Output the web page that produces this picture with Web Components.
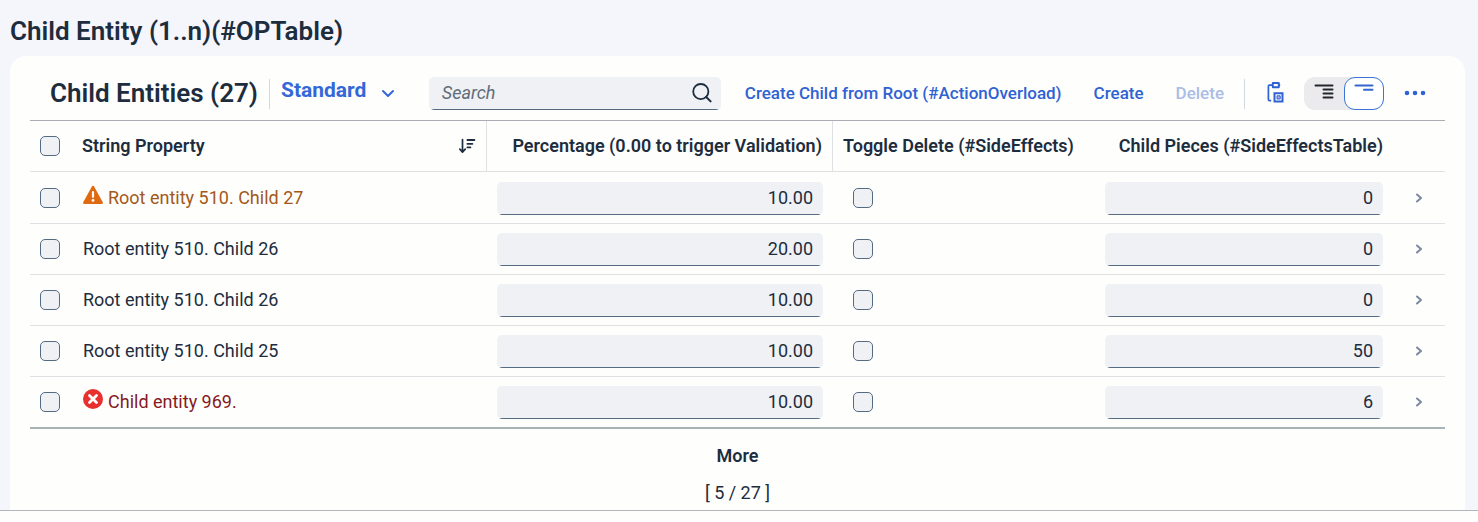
<!DOCTYPE html>
<html lang="en">
<head>
<meta charset="utf-8">
<title>Child Entities</title>
<style>
  body {
    margin: 0;
    background: #fefefd;
    color: #1d2d3e;
    font-family: Roboto, "Noto Sans", sans-serif;
    font-size: 18px;
    --text: #1d2d3e;
    --link: #2f62d3;
    --field: #eff1f5;
    --field-line: #556b82;
    --rule: #dfe1e4;
  }
</style>
</head>
<body>
<object-section heading="Child Entity (1..n)(#OPTable)">
  <table-toolbar slot="toolbar" heading="Child Entities (27)" variant="Standard"></table-toolbar>
  <entity-table></entity-table>
  <growing-trigger count="[ 5 / 27 ]">More</growing-trigger>
</object-section>

<script>
const define = (name, css, render) => customElements.define(name, class extends HTMLElement {
  connectedCallback() {
    if (this.shadowRoot) return;
    const root = this.attachShadow({ mode: "open" });
    root.innerHTML = `<style>*{box-sizing:border-box}${css}</style>${render(this)}`;
  }
});

const icons = {
  down: [14, 14, `<path d="M2 5l5 5 5-5" fill="none" stroke="currentColor" stroke-width="2" stroke-linecap="round" stroke-linejoin="round"/>`],
  next: [8, 10, `<path d="M2 1.5L6 5 2 8.5" fill="none" stroke="currentColor" stroke-width="2" stroke-linecap="round" stroke-linejoin="round"/>`],
  search: [20, 20, `<circle cx="8.8" cy="8.6" r="7.6" fill="none" stroke="currentColor" stroke-width="1.8"/><path d="M14.2 14l4.4 4.4" stroke="currentColor" stroke-width="2" stroke-linecap="round"/>`],
  sort: [17, 16, `<path d="M3.5 1.5v12M.8 11.2l2.7 2.9 2.7-2.9" fill="none" stroke="currentColor" stroke-width="1.7" stroke-linecap="round" stroke-linejoin="round"/><path d="M8.4 2h7M8.4 5.8h5M8.4 9.4h3" stroke="currentColor" stroke-width="1.8" stroke-linecap="round"/>`],
  paste: [17, 21, `<path d="M5.5 3.2H2.4Q1.4 3.2 1.4 4.2V17.6Q1.4 18.6 2.4 18.6H4.2" fill="none" stroke="currentColor" stroke-width="1.7"/><path d="M5.8 1h6v4.2h-6z" fill="none" stroke="currentColor" stroke-width="1.9" stroke-linejoin="round"/><path d="M12 3.2h1.2" stroke="currentColor" stroke-width="1.7"/><path d="M7.5 11.3h8v8.2h-8z" fill="#fefefd" stroke="currentColor" stroke-width="2"/><path d="M10 13.8h3.2v3.2H10z" fill="#b9a8e8" stroke="currentColor" stroke-width="1"/>`],
  expand: [20, 20, `<path d="M1.5 3.5h17M9.5 7.6h9M9.5 11.6h9M9.5 15.6h9" stroke="currentColor" stroke-width="2" stroke-linecap="round"/>`],
  collapse: [20, 20, `<path d="M1.5 3.5h17M10 7.7h8.5" stroke="currentColor" stroke-width="2" stroke-linecap="round"/>`],
  more: [22, 6, `<g fill="currentColor"><circle cx="3" cy="3" r="2.3"/><circle cx="11" cy="3" r="2.3"/><circle cx="19" cy="3" r="2.3"/></g>`],
  warning: [20, 20, `<path d="M10 1.8L18.8 17.8H1.2z" fill="#e06a10" stroke="#e06a10" stroke-width="2.2" stroke-linejoin="round"/><path d="M10 7v4.8" stroke="#fff" stroke-width="2.2" stroke-linecap="round"/><circle cx="10" cy="15.4" r="1.4" fill="#fff"/>`],
  error: [20, 20, `<circle cx="10" cy="10" r="10" fill="#e8312f"/><path d="M6.5 6.5l7 7M13.5 6.5l-7 7" stroke="#fff" stroke-width="2.8" stroke-linecap="round"/>`]
};
define("ui-icon", `:host{display:inline-flex;flex:none}svg{display:block}`, el => {
  const [w, h, body] = icons[el.getAttribute("name")];
  return `<svg width="${w}" height="${h}" viewBox="0 0 ${w} ${h}" aria-hidden="true">${body}</svg>`;
});

define("check-box", `
  :host{display:block;width:20px;height:20px}
  input{appearance:none;display:block;margin:0;width:20px;height:20px;border:1px solid var(--field-line);border-radius:5px;background:var(--field)}
`, el => `<input type="checkbox" aria-label="${el.getAttribute("label")}">`);

define("value-field", `
  :host{display:block}
  input{display:block;width:100%;height:33px;padding:0 10px 2px;border:0;border-radius:5px;text-align:right;font:inherit;color:inherit;
    background:linear-gradient(var(--field-line),var(--field-line)) center bottom/calc(100% - 4px) 1px no-repeat,var(--field)}
`, el => `<input type="text" value="${el.getAttribute("value")}" aria-label="${el.getAttribute("label")}">`);

define("search-field", `
  :host{display:block;position:relative}
  input{display:block;width:100%;height:33px;padding:0 40px 2px 13px;border:0;border-radius:5px;font:inherit;color:inherit;
    background:linear-gradient(var(--field-line),var(--field-line)) center bottom/calc(100% - 4px) 1px no-repeat,var(--field)}
  input::placeholder{color:#5f6c79;font-style:italic;opacity:1}
  button{position:absolute;right:0;top:0;height:32px;width:38px;padding:0;border:0;background:none;color:var(--text);display:flex;align-items:center;justify-content:center}
`, () => `<input type="text" placeholder="Search" aria-label="Search"><button type="button" aria-label="Start search"><ui-icon name="search"></ui-icon></button>`);

define("action-button", `
  :host{display:block}
  button{display:flex;align-items:center;justify-content:center;height:33px;padding:0 0 2px;border:0;background:none;font:inherit;font-size:17px;font-weight:500;color:var(--link);white-space:nowrap}
  button:disabled{color:#aabde6}
`, el => `<button type="button"${el.hasAttribute("off") ? " disabled" : ""}${el.title ? ` aria-label="${el.title}"` : ""}><slot></slot></button>`);

define("detail-switch", `
  :host{display:flex;border-radius:11px;background:#ebebed}
  button{display:flex;justify-content:center;align-items:flex-start;width:40px;height:33px;padding:4px 0 0;border:1px solid transparent;border-radius:11px;background:none;color:#23262c}
  button[aria-pressed=true]{background:#fff;border-color:#3b74d6;color:#3468cf}
`, () => `<button type="button" aria-label="Show details" aria-pressed="false"><ui-icon name="expand"></ui-icon></button><button type="button" aria-label="Hide details" aria-pressed="true"><ui-icon name="collapse"></ui-icon></button>`);

define("table-toolbar", `
  :host{display:flex;align-items:center;height:33px;padding:0 19px 0 20px}
  h3{margin:0;padding-bottom:2px;font-size:26px;line-height:32px;font-weight:600;white-space:nowrap}
  .bar{width:1px;height:30px;background:#d3d8e0;flex:none}
  h3 + .bar{margin:0 11px}
  .variant{display:flex;align-items:center;gap:15px;height:28px;padding:0;margin-bottom:7px;border:0;background:none;font:inherit;font-size:21px;font-weight:700;color:#3468d8}
  .variant ui-icon{padding-top:6px}
  search-field{flex:0 1 292px;margin-left:auto;margin-right:24px}
  nav{display:flex;align-items:center}
  nav > *{margin-right:20px}
  .wide{margin-right:32px}
  .paste{margin-left:2px}
  nav > :last-child{margin-right:0}
`, el => `<h3>${el.getAttribute("heading")}</h3><span class="bar"></span>
  <button class="variant" type="button">${el.getAttribute("variant")}<ui-icon name="down"></ui-icon></button>
  <search-field></search-field>
  <nav>
    <action-button class="wide">Create Child from Root (#ActionOverload)</action-button>
    <action-button class="wide">Create</action-button>
    <action-button off>Delete</action-button>
    <span class="bar"></span>
    <action-button class="paste" title="Paste"><ui-icon name="paste"></ui-icon></action-button>
    <detail-switch></detail-switch>
    <action-button title="More actions"><ui-icon name="more"></ui-icon></action-button>
  </nav>`);

const rows = [
  ["Root entity 510. Child 27", "10.00", "0", "warning"],
  ["Root entity 510. Child 26", "20.00", "0", ""],
  ["Root entity 510. Child 26", "10.00", "0", ""],
  ["Root entity 510. Child 25", "10.00", "50", ""],
  ["Child entity 969.", "10.00", "6", "error"]
];
define("entity-table", `
  :host{display:block;margin-top:10px}
  table{width:100%;table-layout:fixed;border-collapse:separate;border-spacing:0;border-top:1px solid #a9adb2;border-bottom:2px solid #a8b3b8}
  .c-check{width:42px}.c-pct{width:346px}.c-toggle{width:262px}.c-pieces{width:298px}.c-nav{width:52px}
  th,td{height:51px;padding:0 10px;text-align:left;vertical-align:middle;white-space:nowrap;border-bottom:1px solid var(--rule)}
  td{padding-top:1px}
  td check-box,.go{margin-bottom:1px}
  tbody tr:first-child td{height:52px}
  tbody tr:last-child td{height:50px;border-bottom:0}
  th{font-weight:600;line-height:20px;padding-bottom:1px}
  th.num{text-align:right}
  th.line{border-right:1px solid var(--rule)}
  .head{display:flex;align-items:center;justify-content:space-between}
  .name{display:flex;align-items:center;gap:5px;padding:0 0 2px 1px}
  .name ui-icon{margin-bottom:5px}
  .toggle{margin-left:10px}
  .warning{color:#a4581a}
  .error{color:#861a1f}
  .go{display:flex;justify-content:center;width:100%;border:0;padding:0;background:none;color:#7b88a0}
`, () => `<table>
  <colgroup><col class="c-check"><col><col class="c-pct"><col class="c-toggle"><col class="c-pieces"><col class="c-nav"></colgroup>
  <thead><tr>
    <th><check-box label="Select all"></check-box></th>
    <th class="line"><div class="head">String Property<ui-icon name="sort"></ui-icon></div></th>
    <th class="num line">Percentage (0.00 to trigger Validation)</th>
    <th>Toggle Delete (#SideEffects)</th>
    <th class="num">Child Pieces (#SideEffectsTable)</th>
    <th></th>
  </tr></thead>
  <tbody>${rows.map(([name, pct, pieces, state]) => `<tr>
    <td><check-box label="Select ${name}"></check-box></td>
    <td><div class="name ${state}">${state ? `<ui-icon name="${state}"></ui-icon>` : ""}<span>${name}</span></div></td>
    <td><value-field value="${pct}" label="Percentage"></value-field></td>
    <td><check-box class="toggle" label="Toggle Delete"></check-box></td>
    <td><value-field value="${pieces}" label="Child Pieces"></value-field></td>
    <td><button class="go" type="button" aria-label="Open ${name}"><ui-icon name="next"></ui-icon></button></td>
  </tr>`).join("")}</tbody></table>`);

define("growing-trigger", `
  :host{display:block;padding-top:8px;text-align:center}
  button{display:block;width:100%;height:38px;padding:0 0 1px;border:0;background:none;font:inherit;font-weight:600;color:inherit}
  p{margin:0;line-height:35px}
`, el => `<button type="button"><slot></slot></button><p>${el.getAttribute("count")}</p>`);

define("object-section", `
  :host{display:block;padding:15px 13px 0 10px;background:#f5f6fb;border-bottom:1px solid #b3b4bb}
  h2{margin:0 0 9px;font-size:26px;line-height:32px;font-weight:600}
  .card{padding:21px 20px 0;border-radius:16px 16px 0 0;background:#fefefd}
`, el => `<h2>${el.getAttribute("heading")}</h2><div class="card"><slot name="toolbar"></slot><slot></slot></div>`);
</script>
</body>
</html>
